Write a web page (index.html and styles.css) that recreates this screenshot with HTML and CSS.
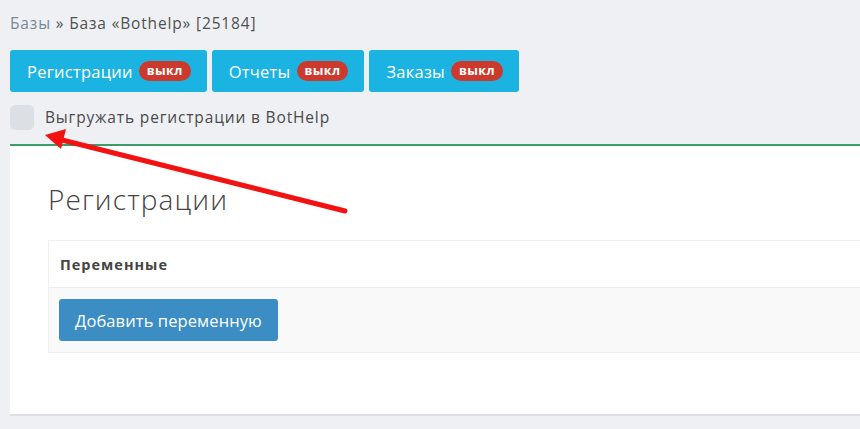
FILE: index.html
```html
<!DOCTYPE html>
<html lang="ru">
<head>
    <meta charset="UTF-8">
    <meta name="viewport" content="width=device-width, initial-scale=1.0">
    <title>База «Bothelp»</title>
    <link rel="stylesheet" href="styles.css">
</head>
<body>
    <div class="breadcrumb">
        <a href="#">Базы</a> » База «Bothelp» [25184]
    </div>

    <div class="tabs">
        <button class="tab">Регистрации <span class="badge">выкл</span></button>
        <button class="tab">Отчеты <span class="badge">выкл</span></button>
        <button class="tab">Заказы <span class="badge">выкл</span></button>
    </div>

    <label class="export-check">
        <span class="check-box"></span>
        Выгружать регистрации в BotHelp
    </label>

    <div class="panel">
        <h2>Регистрации</h2>
        <div class="vars">
            <div class="vars-head">Переменные</div>
            <div class="vars-body">
                <button class="add-btn">Добавить переменную</button>
            </div>
        </div>
    </div>

    <!-- стрелка поверх скриншота -->
    <svg class="arrow" width="860" height="429" viewBox="0 0 860 429">
        <line x1="345" y1="211" x2="58" y2="139" stroke="#f31212" stroke-width="5" stroke-linecap="round"/>
        <polygon points="45,135 66,129 61,149" fill="#f31212"/>
    </svg>
</body>
</html>
```

FILE: styles.css
```css
:root {
    --bg-color: #eef0f4;
    --text-color: #444;
    --tab-color: #1bb4e2;
    --badge-color: #cc3a2e;
    --btn-color: #3b8dc3;
    --green: #3a9e68;
}

* {
    box-sizing: border-box;
}

body {
    margin: 0;
    padding: 0 0 0 10px;
    background-color: var(--bg-color);
    color: var(--text-color);
    font-family: "Open Sans", "Noto Sans", sans-serif;
    overflow: hidden;
}

.breadcrumb {
    height: 50px;
    padding-top: 12px;
    font-size: 15.5px;
    letter-spacing: 0.85px;
    color: #505050;
}

.breadcrumb a {
    color: #7a8896;
    text-decoration: none;
}

.tabs {
    display: flex;
    gap: 5px;
}

.tab {
    display: flex;
    align-items: center;
    gap: 6px;
    height: 42px;
    padding: 0 16px 0 17px;
    border: none;
    border-radius: 3px;
    background-color: var(--tab-color);
    color: #fff;
    font-family: inherit;
    font-size: 16.5px;
    letter-spacing: 0.25px;
    cursor: pointer;
}

.badge {
    display: inline-block;
    height: 20px;
    line-height: 20px;
    padding: 0 8px;
    border-radius: 10px;
    background-color: var(--badge-color);
    font-size: 12.5px;
    font-weight: bold;
    letter-spacing: 0.4px;
}

.export-check {
    display: flex;
    align-items: center;
    gap: 11px;
    height: 52px;
    padding-bottom: 2px;
    font-size: 15.5px;
    letter-spacing: 0.85px;
    color: #4a4a4a;
}

.check-box {
    width: 24px;
    height: 25px;
    border-radius: 5px;
    background-color: #dcdfe3;
}

.panel {
    height: 272px;
    padding: 35px 0 0 38px;
    border-top: 2px solid var(--green);
    border-bottom: 2px solid #dde0e5;
    background-color: #fff;
}

.panel h2 {
    margin: 0 0 23px;
    font-size: 28px;
    font-weight: 300;
    letter-spacing: 1.1px;
    color: #444;
    line-height: 36px;
}

.vars {
    border: 1px solid #f0f0f0;
    border-right: none;
}

.vars-head {
    height: 47px;
    padding: 14px 0 0 11px;
    border-bottom: 1px solid #eeeeee;
    font-size: 14.5px;
    font-weight: bold;
    letter-spacing: 1px;
    color: #444;
}

.vars-body {
    height: 64px;
    padding: 11px 0 0 10px;
    background-color: #f9f9f9;
}

.add-btn {
    height: 42px;
    padding: 0 16px;
    border: none;
    border-radius: 3px;
    background-color: var(--btn-color);
    color: #fff;
    font-family: inherit;
    font-size: 16.5px;
    letter-spacing: 0.1px;
    cursor: pointer;
}

.arrow {
    position: absolute;
    top: 0;
    left: 0;
    pointer-events: none;
}
```
